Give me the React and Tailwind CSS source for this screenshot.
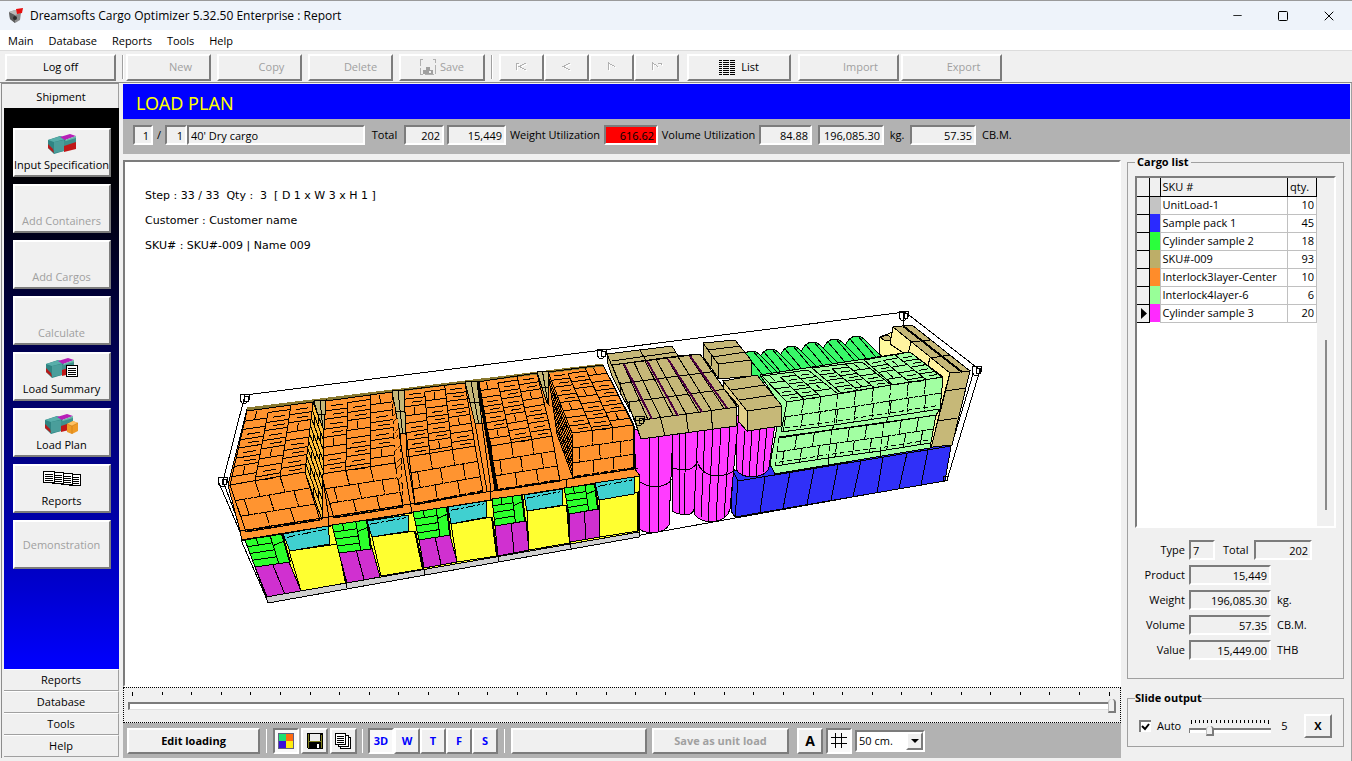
import React from 'react';
import clsx from 'clsx';
import { Minus, Square, X } from 'lucide-react';

const BEVEL = 'border-2 border-t-white border-l-white border-b-[#7c7c7c] border-r-[#7c7c7c] bg-[#f0f0f0]';
const SUNKEN = 'border-2 border-t-[#7c7c7c] border-l-[#7c7c7c] border-b-white border-r-white';

const MENU = ['Main', 'Database', 'Reports', 'Tools', 'Help'];

const CARGO = [
  { sku: 'UnitLoad-1', qty: 10, color: 'bg-[#c4c4c4]' },
  { sku: 'Sample pack 1', qty: 45, color: 'bg-[#2a2aff]' },
  { sku: 'Cylinder sample 2', qty: 18, color: 'bg-[#2aff3c]' },
  { sku: 'SKU#-009', qty: 93, color: 'bg-[#bdae68]' },
  { sku: 'Interlock3layer-Center', qty: 10, color: 'bg-[#ff8c2a]' },
  { sku: 'Interlock4layer-6', qty: 6, color: 'bg-[#98ff98]' },
  { sku: 'Cylinder sample 3', qty: 20, color: 'bg-[#ff2aff]' },
];

/* ---------- small building blocks ---------- */

const Button = ({ className, disabled, children, ...rest }) => (
  <button
    disabled={disabled}
    className={clsx('flex items-center justify-center whitespace-nowrap', BEVEL, disabled && 'text-[#a0a0a0]', className)}
    {...rest}
  >
    {children}
  </button>
);

const Field = ({ className, ...rest }) => (
  <input readOnly className={clsx('h-5 min-w-0 px-0.5 outline-none', SUNKEN, className)} {...rest} />
);

const Separator = () => <span className="w-0.5 h-6 border-l border-[#a0a0a0] border-r border-r-white shrink-0" />;

/* ---------- icons ---------- */

const AppIcon = () => (
  <svg width="16" height="16" viewBox="0 0 16 16">
    <path d="M1 4l6-2 6 3-1 7-5 3-5-4z" fill="#8a8a8a" />
    <path d="M1 4l6 3v8l-5-4z" fill="#5c5c5c" />
    <path d="M1 4l6-2 6 3-6 2z" fill="#b9b9b9" />
    <circle cx="7" cy="10" r="2" fill="#2b2b2b" />
    <path d="M8 1l7-1-1 5-5 1z" fill="#e80f0f" />
  </svg>
);

const CargoIcon = ({ children, shift = 0 }) => (
  <svg width="36" height="22" viewBox="0 0 36 22">
    <g transform={`translate(${4 + shift} 1)`}>
      <path d="M0 6l12-4 6 3-2 12-10 3-6-6z" fill="#2f8583" />
      <path d="M0 6l13-4 5 3-12 3z" fill="#58aeaa" />
      <path d="M6 8l10-2v11L6 19z" fill="#4a9e9b" />
      <path d="M0 10l5 5 1 4-6-5z" fill="#b81c1c" />
      <path d="M16 7l12-4v6l-12 4z" fill="#3e918c" />
      <path d="M16 12l12-4v7l-12 3z" fill="#c01818" />
      <path d="M12 3l10-3 6 2-11 4z" fill="#b81fb8" />
      <path d="M17 6l11-4v2l-10 3z" fill="#6ab8a8" />
    </g>
    {children}
  </svg>
);

const SummaryIcon = () => (
  <CargoIcon shift={-2}>
    <rect x="22.500" y="8.500" width="11" height="11" fill="#fff" stroke="#000" />
    <path d="M24 11.500h8M24 13.500h8M24 15.500h8M24 17.500h8" stroke="#000" />
  </CargoIcon>
);

const PlanIcon = () => (
  <CargoIcon shift={-3}>
    <path d="M23 11l6-3 5 2v8l-6 3-5-2z" fill="#ef9a26" />
    <path d="M23 11l6-3 5 2-6 3z" fill="#ffc164" />
    <path d="M28 13v8M23 11l5 2 6-3" fill="none" stroke="#c77a12" strokeWidth="0.6" />
  </CargoIcon>
);

const PagesIcon = () => (
  <svg width="38" height="20" viewBox="0 0 38 20" shapeRendering="crispEdges">
    {[26, 18, 9, 0].map((x, i) => (
      <g key={x}>
        <rect x={x + 0.5} y={3.5 - i} width="11" height="11" fill="#fff" stroke="#000" />
        <path d={`M${x + 2} ${6.5 - i}h8M${x + 2} ${8.5 - i}h8M${x + 2} ${10.5 - i}h8M${x + 2} ${12.5 - i}h8`} stroke="#000" />
      </g>
    ))}
  </svg>
);

const FloppyIcon = ({ disabled }) =>
  disabled ? (
    <svg width="16" height="16" viewBox="0 0 16 16" shapeRendering="crispEdges">
      <path d="M3 0.500H0.500v15h15v-15H13" fill="none" stroke="#b0b0b0" strokeDasharray="9 2" />
      <path d="M3 11h3V8h4v3h3v4H3z" fill="#a0a0a0" />
      <path d="M9 12h2v2H9z" fill="#f0f0f0" />
    </svg>
  ) : (
    <svg width="16" height="16" viewBox="0 0 16 16" shapeRendering="crispEdges">
      <path d="M0 0h16v16H1L0 15z" fill="#000" />
      <path d="M1 1h1v14H1zM14 2h1v13h-1zM2 8h12v1H2z" fill="#80801c" />
      <path d="M3 1h10v7H3z" fill="#ececec" />
      <path d="M10 11h2v4h-2z" fill="#fff" />
    </svg>
  );

const PaletteIcon = () => (
  <svg width="16" height="16" viewBox="0 0 16 16" shapeRendering="crispEdges">
    <rect width="16" height="16" fill="#606080" />
    <path d="M1 1h7v7H1z" fill="#1fe070" />
    <path d="M8 1h7v7H8z" fill="#ff6a10" />
    <path d="M1 8h7v7H1z" fill="#3a10d8" />
    <path d="M8 8h7v7H8z" fill="#ffee10" />
  </svg>
);

const CopiesIcon = () => (
  <svg width="17" height="16" viewBox="0 0 17 16" shapeRendering="crispEdges" fill="#fff" stroke="#000">
    <path d="M5.500 4.500h10v11h-10z" />
    <path d="M3.500 2.500h10v11h-10z" />
    <path d="M0.500 0.500h10v11h-10z" />
    <path d="M2 3.500h7M2 5.500h7M2 7.500h7M2 9.500h7" />
  </svg>
);

const ListIcon = () => (
  <svg width="16" height="15" viewBox="0 0 16 15" shapeRendering="crispEdges">
    <path d="M0 0.500h16M0 2.500h16M0 4.500h16M0 6.500h16M0 8.500h16M0 10.500h16M0 12.500h16M0 14.500h16" stroke="#000" strokeDasharray="3 1 6 1 5 0" />
  </svg>
);

const NavIcon = ({ d }) => (
  <svg width="14" height="10" viewBox="0 0 14 10" fill="none" shapeRendering="crispEdges">
    <path d={d} stroke="#fff" transform="translate(1 1)" />
    <path d={d} stroke="#b0b0b0" />
  </svg>
);

const GridIcon = () => (
  <svg width="18" height="18" viewBox="0 0 18 18" shapeRendering="crispEdges">
    <path d="M5.500 1v15M11.500 1v15M1 5.500h16M1 11.500h16" stroke="#000" />
  </svg>
);

/* ---------- 3D load drawing ---------- */

// point inside a four sided face, u runs left to right, v top to bottom
const at = ([a, b, c, d], u, v) => [
  (a[0] * (1 - u) + b[0] * u) * (1 - v) + (d[0] * (1 - u) + c[0] * u) * v,
  (a[1] * (1 - u) + b[1] * u) * (1 - v) + (d[1] * (1 - u) + c[1] * u) * v,
];
const pt = (p) => `${p[0].toFixed(1)} ${p[1].toFixed(1)}`;
const seg = (f, u1, v1, u2, v2) => `M${pt(at(f, u1, v1))}L${pt(at(f, u2, v2))}`;
const poly = (f) => `M${f.map(pt).join('L')}Z`;

// running bond
const bricks = (f, cols, rows, stagger = 0) => {
  let d = '';
  for (let r = 0; r < rows; r++) {
    if (r) d += seg(f, 0, r / rows, 1, r / rows);
    for (let c = 0; c <= cols; c++) {
      const u = (c + (r % 2 ? stagger : 0)) / cols;
      if (u > 0 && u < 1) d += seg(f, u, r / rows, u, (r + 1) / rows);
    }
  }
  return d;
};

// interlocked layer seen from above: slats with a turned box now and then
const slats = (f, cols, rows, seed = 0) => {
  let d = '';
  for (let r = 0; r < rows; r++) {
    for (let c = 0; c < cols; c++) {
      const u = c / cols;
      const w = 1 / cols;
      const h = 1 / rows;
      const v = r * h + (c % 2) * 0.25 * h;
      d += seg(f, u, v, u + w, v);
      if (c) d += seg(f, u, v, u, Math.min(1, v + h));
      if ((r + c + seed) % 3 === 0) {
        d += seg(f, u + w * 0.45, v + h * 0.1, u + w * 0.45, v + h * 0.5);
        d += seg(f, u, v + h * 0.55, u + w, v + h * 0.55);
      } else {
        d += seg(f, u + w * 0.25, v + h * 0.3, u + w * 0.8, v + h * 0.3);
        d += seg(f, u, v + h * 0.55, u + w, v + h * 0.55);
        d += seg(f, u + w * 0.35, v + h * 0.78, u + w * 0.85, v + h * 0.78);
      }
    }
  }
  return d;
};

const ORANGE_TOPS = [
  [[247, 412], [313, 403], [305, 473], [230, 486]],
  [[326, 402], [392, 393], [395, 464], [321, 475]],
  [[404, 391], [465, 384], [475, 447], [407, 458]],
  [[477, 383], [537, 374], [552, 437], [491, 447]],
  [[548, 373], [603, 366], [633, 426], [572, 434]],
];
const ORANGE_FRONTS = [
  [[230, 486], [305, 473], [320, 521], [246, 533]],
  [[321, 475], [395, 464], [403, 508], [334, 519]],
  [[407, 458], [475, 447], [483, 493], [415, 506]],
  [[491, 447], [552, 437], [560, 482], [496, 492]],
  [[572, 434], [633, 426], [634, 470], [573, 479]],
];
const TAN_GAPS = [
  [[314, 402], [326, 401], [324, 430], [322, 430]],
  [[392, 392], [404, 391], [406, 434], [399, 434]],
  [[465, 383], [477, 382], [482, 424], [475, 424]],
  [[537, 373], [548, 372], [549, 406], [547, 404]],
];
const SIDES = [
  { face: [[313, 403], [324, 432], [322, 521], [305, 473]], fill: '#ffbe3c' },
  { face: [[392, 393], [400, 434], [403, 508], [395, 464]], fill: '#3a2000' },
  { face: [[477, 383], [479, 383], [498, 491], [495, 491]], fill: '#000' },
  { face: [[548, 373], [572, 434], [573, 479], [557, 435]], fill: '#ff9430' },
];

const UNIT_LOADS = [
  {
    green: [[245, 541], [282, 535], [290, 563], [255, 568]],
    purple: [[255, 568], [289, 563], [301, 592], [267, 598]],
    cyan: [[283, 535], [328, 527], [330, 545], [290, 552]],
    yellow: [[289, 552], [338, 545], [346, 584], [301, 592]],
  },
  {
    green: [[332, 526], [367, 521], [371, 550], [339, 554]],
    purple: [[339, 554], [372, 549], [380, 578], [347, 584]],
    cyan: [[367, 522], [408, 516], [409, 532], [372, 538]],
    yellow: [[372, 538], [415, 532], [423, 570], [381, 577]],
  },
  {
    green: [[413, 513], [447, 508], [450, 536], [419, 541]],
    purple: [[419, 541], [450, 536], [457, 563], [424, 569]],
    cyan: [[448, 508], [486, 502], [487, 518], [451, 525]],
    yellow: [[451, 525], [492, 518], [497, 557], [457, 563]],
  },
  {
    green: [[492, 500], [522, 496], [525, 522], [495, 527]],
    purple: [[495, 527], [526, 522], [529, 551], [498, 557]],
    cyan: [[524, 496], [562, 490], [563, 506], [527, 512]],
    yellow: [[527, 512], [567, 506], [570, 544], [529, 551]],
  },
  {
    green: [[564, 489], [595, 485], [598, 510], [569, 515]],
    purple: [[569, 515], [599, 510], [600, 538], [570, 543]],
    cyan: [[595, 484], [634, 478], [634, 495], [599, 501]],
    yellow: [[599, 500], [638, 493], [638, 532], [600, 538]],
  },
];

const GREEN_TUBES = [[855, 337], [833, 340], [811, 343], [790, 347], [769, 350], [750, 352]];

const MINT_TOPS = [
  [[762, 377], [808, 371], [838, 395], [787, 403]],
  [[812, 369], [862, 363], [891, 386], [841, 394]],
  [[864, 361], [910, 353], [943, 378], [893, 386]],
];
const MINT_FRONTS = [
  [[787, 403], [838, 395], [834, 426], [781, 433]],
  [[838, 395], [891, 386], [888, 418], [834, 426]],
  [[891, 386], [943, 378], [940, 410], [888, 418]],
  [[779, 439], [832, 431], [828, 459], [775, 467]],
  [[832, 431], [884, 424], [880, 452], [828, 459]],
  [[884, 424], [936, 416], [930, 444], [880, 452]],
];

const TAN_TOP = [[612, 366], [700, 355], [737, 408], [635, 422]];
const TAN_FRONT = [[635, 422], [737, 408], [736, 427], [641, 440]];
const BLUE_SEAMS = [[765, 760], [790, 783], [814, 807], [838, 831], [861, 853], [883, 877], [907, 899], [928, 921]];

const CORNERS = [[223, 482], [245, 399], [602, 354], [640, 421], [904, 316], [977, 371]];

const LoadDrawing = () => (
  <svg width="775" height="305" viewBox="215 305 775 305" fill="none" stroke="#000" strokeWidth="1" shapeRendering="crispEdges" role="img" aria-label="Container load">
    {/* container wireframe */}
    <path d="M223 482L245 396L905 313L980 371L947 481M905 313L902 332M973 375L952 445M223 482L268 603L947 481M219 484L241 535" />

    {/* green tubes lying at the back */}
    {GREEN_TUBES.map(([x, y]) => (
      <g key={x}>
        <path fill="#38f868" d={`M${x - 10} ${y + 10}Q${x - 6} ${y} ${x + 2} ${y}Q${x + 6} ${y} ${x + 10} ${y + 4}L${x + 30} ${y + 24}L${x + 8} ${y + 34}Z`} />
        <path d={`M${x - 5} ${y + 3}l22 26M${x + 3} ${y}l22 26`} />
      </g>
    ))}

    {/* boxes by the door */}
    <path fill="#fffa9e" d="M880 338L893 333L930 360L943 390L900 375L879 354Z" />
    <path fill="#c6b878" d="M880 338L888 336L894 342L884 341Z" />
    <path fill="#fff3a0" d="M893 328L950 374L945 392L931 449L926 449L938 398L937 376L890 345Z" />
    <path fill="#c6b878" d="M893 328L912 326L970 372L950 374Z" />
    <path fill="#c6b878" d="M950 374L970 372L952 446L931 449Z" />
    <path d="M945 392L966 389M938 422L957 419M911 343L930 341M930 359L950 356M911 343L908 355M930 359L926 373" />
    <path d="M903 327L962 373" strokeWidth="2" />

    {/* sample packs */}
    <path fill="#3030f8" d="M733 472L950 446L951 447L945 482L735 518L731 512Z" />
    <path d={`M733 472L738 482L735 518M738 482L951 447${BLUE_SEAMS.map(([a, b]) => `M${a} ${482 - (a - 738) * 0.165}L${b} ${518 - (b - 735) * 0.172}`).join('')}`} />

    {/* interlocked 4 layer pallets */}
    <path fill="#a2ffa2" d="M760 376L910 353L943 379L940 410L936 416L930 449L775 475L770 465L781 407Z" />
    {MINT_TOPS.map((f, i) => (
      <path key={i} d={poly(f) + slats(f, 3, 2, i)} />
    ))}
    {MINT_FRONTS.map((f, i) => (
      <g key={i}>
        <path d={bricks(f, 3, 2, i > 2 ? 0.4 : 0.1)} strokeDasharray="9 1 4 1" />
        <path d={seg(f, 0, 0, 1, 0) + seg(f, 0, 1, 1, 1)} />
        <path d={seg(f, 0, 0, 0, 0.95) + seg(f, 0.06, 0.88, 0.98, 0.88)} strokeDasharray="5 3" />
      </g>
    ))}
    <path d="M779 438L937 416M774 475L930 449M828 459V466M880 452V458M834 426L832 431M888 418L886 424M787 403L781 433M943 378L940 410L936 416L930 449" />

    {/* magenta cylinders */}
    <g fill="#ff3cff">
      <path d="M672 430L672 512Q680 517 690 515Q696 512 696 500L698 430Z" />
      <path d="M736 416L736 470Q740 478 753 478Q768 476 769 468L775 425Z" />
      <path d="M698 428L694 514Q698 523 714 523Q728 520 730 510L738 424Z" />
      <path d="M634 430L638 528Q641 534 654 534Q666 532 669 526L673 430Z" />
    </g>
    <path d="M635 479Q645 488 655 488Q668 487 672 480M673 469Q682 472 690 470Q696 467 698 462M698 465Q704 477 717 477Q731 476 735 470" />
    <path d="M649 436L650 533M658 436L658 533M679 434V515M686 432L684 516M705 430L701 519M713 430L708 522M721 428L716 522M730 428L724 519M745 432L742 476M752 432L749 478M760 430L756 477M767 428L763 473" />

    {/* SKU#-009 boxes on top of the cylinders */}
    <path fill="#c6b878" d="M607 355L672 347L678 357L700 355L737 408L736 427L641 440L632 415L622 397L612 377L607 362Z" />
    <path d={`M607 355L635 422M612 366L678 357M640 351L646 362${bricks(TAN_TOP, 8, 3)}${poly(TAN_TOP)}${poly(TAN_FRONT)}${bricks(TAN_FRONT, 4, 1)}`} />
    <path d="M612 362L676 353M620 383L620 396M629 402L630 413" />
    <path d="M624 365L652 420M647 362L678 417M668 360L702 413M690 357L727 409" stroke="#4a0040" strokeWidth="2" />
    <g fill="#c6b878">
      <path d="M703 344L735 341L751 361L751 377L719 380L704 359Z" />
      <path d="M703 344L718 365L751 361M718 365L719 380M708 351L741 347M713 358L745 353M711 355L711 367" />
      <path d="M723 382L757 376L782 407L781 427L747 432L739 423L738 408L724 390Z" />
      <path d="M747 412L782 407M731 391L765 386M739 401L773 396" />
      <path fill="#e2cf8a" d="M723 382L747 412L747 432L739 423L738 406L724 390Z" />
    </g>

    {/* interlocked 3 layer pallets */}
    <path fill="#ff9430" d="M247 410L603 366L634 426L635 470L640 477L242 542L240 532L228 486Z" />
    <path d="M247 410L603 366" stroke="#8a7a30" strokeWidth="3" />
    {TAN_GAPS.map((f, i) => (
      <path key={i} fill="#c6b878" d={poly(f) + seg(f, 0.5, 0, 0.5, 1) + seg(f, 0, 0.5, 1, 0.5)} />
    ))}
    {ORANGE_TOPS.map((f, i) => (
      <path key={i} d={poly(f) + slats(f, 3, 4, i)} />
    ))}
    {ORANGE_FRONTS.map((f, i) => (
      <g key={i}>
        <path d={poly(f) + seg(f, 0, 1, 1, 1)} />
        <path d={bricks(f, 3, 3, 0.35)} strokeDasharray="12 1 5 1" />
      </g>
    ))}
    {SIDES.map(({ face, fill }, i) => (
      <g key={i}>
        <path d={poly(face)} fill={fill} />
        {i !== 2 && <path d={bricks(face, i === 1 ? 3 : 2, 9, 0.5)} stroke={i === 1 ? '#ff9430' : '#000'} />}
      </g>
    ))}
    <path d="M322 475L329 519M399 434L411 508M406 434L415 505M475 424L487 492M482 424L491 491M240 532L638 469M241 541L640 477M328 519V527M411 508L412 514M490 491V500M566 480V488" />
    <path d="M247 532L320 520M334 518L403 507M415 505L483 492M497 491L560 481M574 478L634 469" strokeWidth="2" strokeDasharray="7 2" />

    {/* unit loads on the floor */}
    <path fill="#ffff30" d="M245 541L640 477L639 533L267 598Z" />
    {UNIT_LOADS.map(({ green, purple, cyan, yellow }, i) => (
      <g key={i}>
        <path fill="#ffff30" d={poly(yellow)} />
        <path fill="#40d0d0" d={poly(cyan)} />
        <path d={seg(cyan, 0.05, 0.22, 0.95, 0.15)} strokeDasharray="9 2 3 2" />
        <path fill="#d030d0" d={poly(purple) + seg(purple, 0.52, 0, 0.52, 1)} />
        <path
          fill="#2cff2c"
          d={poly(green) + seg(green, 0.68, 0, 0.68, 1) + seg(green, 0, 0.25, 0.68, 0.25) + seg(green, 0, 0.5, 0.68, 0.5) + seg(green, 0, 0.75, 0.68, 0.75) + seg(green, 0.3, 0, 0.3, 0.25) + seg(green, 0.68, 0.35, 1, 0.25)}
        />
        <path d={seg(green, 1, 0, 1, 1) + seg(yellow, 1, 0, 1, 1)} strokeWidth="2" />
      </g>
    ))}
    <path fill="#cfcfcf" d="M266 598L639 533L639 538L268 604Z" />
    <path d="M346 584V589M424 570V576M498 557V563M570 544V549M241 541L268 603" />

    {/* corner castings */}
    {CORNERS.map(([x, y]) => (
      <path key={x} d={`M${x - 4} ${y - 4}h8v6l-3 3h-4l-2 -3zM${x - 1} ${y - 2}h4v5h-4z`} />
    ))}
    <path d="M943 477h4v4h-4z" />
  </svg>
);

/* ---------- window parts ---------- */

const TitleBar = () => (
  <header className="flex items-center h-[30px] bg-[#eef3fa] pl-2 text-xs border-t border-[#9a9a9a]">
    <AppIcon />
    <h1 className="ml-1.5 grow font-['Open_Sans','Noto_Sans',sans-serif]">Dreamsofts Cargo Optimizer 5.32.50 Enterprise : Report</h1>
    <button aria-label="Minimize" className="w-[46px] flex justify-center"><Minus size={13} strokeWidth={1.5} /></button>
    <button aria-label="Maximize" className="w-[46px] flex justify-center"><Square size={12} strokeWidth={2} /></button>
    <button aria-label="Close" className="w-[46px] flex justify-center"><X size={16} strokeWidth={1.5} /></button>
  </header>
);

const Toolbar = () => (
  <div className="flex items-center h-[33px] pl-[5px] pt-px border-t border-[#dcdcdc] border-b border-b-[#8c8c8c] whitespace-nowrap">
    <Button className="w-[111px] h-[27px]">Log off</Button>
    <span className="ml-1.5 flex"><Separator /></span>
    <div className="flex gap-1.5 ml-0.5">
      <Button disabled className="w-[85px] h-[27px] pl-6">New</Button>
      <Button disabled className="w-[85px] h-[27px] pl-6">Copy</Button>
      <Button disabled className="w-[85px] h-[27px] pl-5">Delete</Button>
      <Button disabled className="w-[86px] h-[27px] gap-1"><FloppyIcon disabled />Save</Button>
    </div>
    <span className="ml-1.5 mr-1.5 flex"><Separator /></span>
    <div className="flex">
      <Button disabled aria-label="First" className="w-[45px] h-[27px]"><NavIcon d="M1.500 8V1.500H4M11 1L4.500 4.500L11 8" /></Button>
      <Button disabled aria-label="Previous" className="w-[45px] h-[27px]"><NavIcon d="M10 1L3.500 4.500L10 8" /></Button>
      <Button disabled aria-label="Next" className="w-[45px] h-[27px]"><NavIcon d="M3.500 8V1L10 4.500" /></Button>
      <Button disabled aria-label="Last" className="w-[45px] h-[27px]"><NavIcon d="M2.500 8V1L8 4.500M8 1H11.500V3" /></Button>
    </div>
    <Button className="ml-2 w-[104px] h-[27px] gap-1.5"><ListIcon />List</Button>
    <Button disabled className="ml-[7px] w-[101px] h-[27px] pl-6">Import</Button>
    <Button disabled className="ml-0.5 w-[101px] h-[27px] pl-6">Export</Button>
  </div>
);

const SideButton = ({ icon, label, disabled }) => (
  <Button disabled={disabled} className={clsx('w-[98px] h-[49px] flex-col', icon || label !== 'Demonstration' ? 'justify-end' : '')}>
    {icon}
    <span className="leading-5">{label}</span>
  </Button>
);

const Sidebar = () => (
  <nav className="w-[118px] shrink-0 flex flex-col border-l border-t border-[#8c8c8c] pl-0.5 pb-px">
    <button className="h-6 bg-[#f0f0f0] border-r border-[#a0a0a0] pt-px">Shipment</button>
    <div className="grow flex flex-col items-center gap-[7px] pt-5 bg-linear-to-b from-black to-[#0000ff]">
      <SideButton icon={<CargoIcon />} label="Input Specification" />
      <SideButton disabled label="Add Containers" />
      <SideButton disabled label="Add Cargos" />
      <SideButton disabled label="Calculate" />
      <SideButton icon={<SummaryIcon />} label="Load Summary" />
      <SideButton icon={<PlanIcon />} label="Load Plan" />
      <SideButton icon={<PagesIcon />} label="Reports" />
      <SideButton disabled label="Demonstration" />
    </div>
    {['Reports', 'Database', 'Tools', 'Help'].map((label) => (
      <button key={label} className="h-[22px] bg-[#f0f0f0] border-b border-r border-[#a0a0a0] border-t border-t-white">{label}</button>
    ))}
  </nav>
);

const InfoBar = () => (
  <div className="flex items-center h-[35px] bg-[#b2b2b2] pl-2.5 pb-[3px] whitespace-nowrap">
    <Field aria-label="Container" defaultValue="1" className="w-5 text-right bg-[#f0f0f0]" />
    <span className="w-3 text-center">/</span>
    <Field aria-label="Container count" defaultValue="1" className="w-[22px] text-right bg-[#f0f0f0]" />
    <Field aria-label="Container type" defaultValue="40' Dry cargo" className="w-[178px] bg-[#f0f0f0]" />
    <label htmlFor="total" className="w-[39px] text-center">Total</label>
    <Field id="total" defaultValue="202" className="w-10 text-right bg-[#f0f0f0]" />
    <Field aria-label="Total products" defaultValue="15,449" className="w-[59px] ml-[3px] text-right bg-[#f0f0f0]" />
    <label htmlFor="wu" className="w-[98px] text-center">Weight Utilization</label>
    <Field id="wu" defaultValue="616.62" className="w-[54px] text-right bg-[#ff0000]" />
    <label htmlFor="vu" className="w-[101px] text-center">Volume Utilization</label>
    <Field id="vu" defaultValue="84.88" className="w-[53px] text-right bg-[#f0f0f0]" />
    <Field id="weight-total" defaultValue="196,085.30" className="w-[66px] ml-1.5 text-right bg-[#f0f0f0]" />
    <label htmlFor="weight-total" className="w-[26px] text-center">kg.</label>
    <Field id="volume-total" defaultValue="57.35" className="w-[66px] text-right bg-[#f0f0f0]" />
    <label htmlFor="volume-total" className="ml-1.5">CB.M.</label>
  </div>
);

const THUMB =
  '[&::-webkit-slider-thumb]:appearance-none [&::-webkit-slider-thumb]:w-2 [&::-webkit-slider-thumb]:border-r-2 [&::-webkit-slider-thumb]:border-b-2 [&::-webkit-slider-thumb]:border-l [&::-webkit-slider-thumb]:border-[#7c7c7c] [&::-webkit-slider-thumb]:border-l-[#c0c0c0] [&::-webkit-slider-thumb]:bg-[#f0f0f0] [&::-webkit-slider-thumb]:rounded-t-sm';

const StepSlider = () => (
  <div className="h-9 border border-dotted border-black bg-[#f0f0f0] px-1 pt-1">
    <div className="flex justify-between pl-1 pr-1.5">
      {Array.from({ length: 34 }, (_, i) => (
        <span key={i} className={clsx('w-px bg-black', i === 0 || i === 33 ? 'h-1' : 'h-[3px]')} />
      ))}
    </div>
    <input
      type="range"
      aria-label="Step"
      min="0"
      max="33"
      defaultValue="33"
      className={clsx(
        'block mt-1.5 w-full h-2 appearance-none bg-white border-t-2 border-l-2 border-[#7c7c7c] border-b border-b-[#e0e0e0]',
        '[&::-webkit-slider-thumb]:h-[14px] [&::-webkit-slider-thumb]:-mt-0.5',
        THUMB,
      )}
    />
  </div>
);

const VIEWS = ['3D', 'W', 'T', 'F', 'S'];

const BottomBar = () => (
  <div className="flex items-center h-[35px] bg-[#b2b2b2] pl-1 pt-px whitespace-nowrap font-bold">
    <Button className="w-[133px] h-[26px]">Edit loading</Button>
    <span className="w-px h-6 bg-white mx-1.5" />
    <div className="flex gap-0.5">
      <button aria-label="Colors" className={clsx('w-[26px] h-[26px] flex items-center justify-center bg-[#f8f8f8]', SUNKEN)}><PaletteIcon /></button>
      <Button aria-label="Save picture" className="w-[27px] h-[26px]"><FloppyIcon /></Button>
      <Button aria-label="Copy pages" className="w-[27px] h-[26px]"><CopiesIcon /></Button>
    </div>
    <span className="w-px h-6 bg-white mx-[5px]" />
    <div className="flex">
      {VIEWS.map((v, i) => (
        <button
          key={v}
          className={clsx('w-[26px] h-[26px] text-[#0000ff]', i === 0 ? `${SUNKEN} bg-[#f8f8f8]` : BEVEL)}
        >
          {v}
        </button>
      ))}
    </div>
    <span className="w-px h-6 bg-white mx-1.5" />
    <Button aria-label="Selected cargo" className="w-[136px] h-[26px]" />
    <Button disabled className="ml-[5px] w-[137px] h-[26px]">Save as unit load</Button>
    <Button className="ml-2 w-[26px] h-[26px] text-sm">A</Button>
    <button aria-label="Grid" className={clsx('ml-[3px] w-[26px] h-[26px] flex items-center justify-center bg-[#f8f8f8]', SUNKEN)}><GridIcon /></button>
    <div className="relative ml-[3px] font-normal">
      <select aria-label="Grid size" className={clsx('block w-[70px] h-[22px] pl-0.5 appearance-none bg-white outline-none', SUNKEN)}>
        <option>50 cm.</option>
      </select>
      <span className={clsx('absolute right-0.5 top-0.5 w-[17px] h-[18px] flex items-center justify-center pointer-events-none', BEVEL)}>
        <svg width="8" height="4" viewBox="0 0 8 4"><path d="M0 0h8L4 4z" /></svg>
      </span>
    </div>
  </div>
);

const CargoTable = () => (
  <div className={clsx('flex h-[352px] bg-white', SUNKEN)}>
    <div className="grow">
      <table className="w-full table-fixed border-collapse">
        <thead>
          <tr className="h-[18px] bg-[#f0f0f0] text-left">
            <th aria-label="Current row" className="w-3 border-r border-b border-black" />
            <th aria-label="Color" className="w-[11px] border-r border-b border-black" />
            <th className="font-normal border-r border-b border-black pl-0.5">SKU #</th>
            <th className="w-[29px] font-normal border-r border-b border-black pl-0.5">qty.</th>
          </tr>
        </thead>
        <tbody>
          {CARGO.map(({ sku, qty, color }, i) => (
            <tr key={sku} className="h-[18px] leading-4">
              <td className="bg-[#f0f0f0] border-r border-b border-black p-0">
                {i === CARGO.length - 1 && (
                  <svg className="ml-1" width="6" height="11" viewBox="0 0 6 11"><path d="M0 0l6 5.500L0 11z" /></svg>
                )}
              </td>
              <td className={clsx('p-0', color)} />
              <td className="border-l border-r border-b border-[#c0c0c0] py-0 pl-0.5 pr-0 whitespace-nowrap">{sku}</td>
              <td className="border-r border-b border-[#c0c0c0] py-0 pl-0 pr-0.5 text-right">{qty}</td>
            </tr>
          ))}
        </tbody>
      </table>
    </div>
    <div className="w-[17px] shrink-0 bg-[#f0f0f0] flex justify-center pt-[162px]">
      <span className="w-0.5 h-[170px] bg-[#8a8a8a]" />
    </div>
  </div>
);

const TOTALS = [
  { label: 'Product', value: '15,449', unit: '' },
  { label: 'Weight', value: '196,085.30', unit: 'kg.' },
  { label: 'Volume', value: '57.35', unit: 'CB.M.' },
  { label: 'Value', value: '15,449.00', unit: 'THB' },
];

const RightPanel = () => (
  <aside className="w-[229px] shrink-0 bg-[#f0f0f0] pl-1.5 pr-1.5">
    <fieldset className="border border-[#a0a0a0] px-[7px] pb-4 h-[525px]">
      <legend className="font-bold px-0.5 leading-4">Cargo list</legend>
      <div className="mt-1.5"><CargoTable /></div>
      <div className="mt-3 flex flex-col gap-[5px]">
        <div className="flex items-center">
          <label htmlFor="type" className="w-[50px] text-right">Type</label>
          <Field id="type" defaultValue="7" className="ml-1 w-[26px]" />
          <label htmlFor="sum" className="ml-2 w-[27px]">Total</label>
          <Field id="sum" defaultValue="202" className="ml-1 w-[58px] text-right" />
        </div>
        {TOTALS.map(({ label, value, unit }) => (
          <div key={label} className="flex items-center">
            <label htmlFor={label} className="w-[50px] text-right">{label}</label>
            <Field id={label} defaultValue={value} className="ml-1 w-[82px] text-right" />
            <span className="ml-1.5">{unit}</span>
          </div>
        ))}
      </div>
    </fieldset>
    <fieldset className="mt-[11px] border border-[#a0a0a0] px-[11px] h-[57px]">
      <legend className="font-bold leading-4 -ml-1">Slide output</legend>
      <div className="flex items-center mt-2">
        <span className="relative flex">
          <input
            id="auto"
            type="checkbox"
            defaultChecked
            className="peer appearance-none w-3 h-3 bg-white border-t-2 border-l-2 border-[#7c7c7c]"
          />
          <svg className="absolute left-0.5 top-0.5 hidden peer-checked:block pointer-events-none" width="10" height="9" viewBox="0 0 10 9">
            <path d="M1 4l3 3 4-5" fill="none" stroke="#000" strokeWidth="2" />
          </svg>
        </span>
        <label htmlFor="auto" className="ml-1.5">Auto</label>
        <div className="ml-2 w-[82px]">
          <div className="flex justify-between px-0.5">
            {Array.from({ length: 20 }, (_, i) => (
              <span key={i} className={clsx('w-px bg-black', i === 0 || i === 19 ? 'h-1' : 'h-[3px]')} />
            ))}
          </div>
          <input
            type="range"
            aria-label="Slide delay"
            min="1"
            max="20"
            defaultValue="5"
            className={clsx(
              'block mt-1 w-full h-[5px] appearance-none bg-white border-t-2 border-l border-[#7c7c7c]',
              '[&::-webkit-slider-thumb]:h-[10px]',
              THUMB,
            )}
          />
        </div>
        <span className="ml-2.5 grow">5</span>
        <Button aria-label="Stop" className="w-7 h-6 font-bold">X</Button>
      </div>
    </fieldset>
  </aside>
);

const App = () => (
  <div className="flex flex-col min-h-screen bg-[#f0f0f0] text-black text-[11px] leading-4 font-['Open_Sans','Noto_Sans',sans-serif]">
    <TitleBar />
    <nav className="flex items-center gap-[15px] h-5 pt-0.5 bg-white pl-2">
      {MENU.map((item) => (
        <button key={item}>{item}</button>
      ))}
    </nav>
    <Toolbar />
    <div className="grow flex pl-px pb-[3px] border-r border-[#a0a0a0]">
      <Sidebar />
      <div className="grow ml-1 mr-px pt-px flex flex-col min-w-0">
        <h2 className="h-[35px] flex items-center pl-[13px] pt-0.5 bg-[#0000ff] text-[#ffff00] text-lg font-['Noto_Sans',sans-serif]">LOAD PLAN</h2>
        <InfoBar />
        <div className="grow flex">
          <main className="grow flex flex-col min-w-0 pt-1.5">
            <section className={clsx('grow bg-white pl-5 pt-6', SUNKEN)}>
              <div className="flex flex-col gap-[5px] leading-5 font-['DejaVu_Sans',sans-serif]">
                <p className="whitespace-pre">Step : 33 / 33  Qty :  3  [ D 1 x W 3 x H 1 ]</p>
                <p>Customer : Customer name</p>
                <p>SKU# : SKU#-009 | Name 009</p>
              </div>
              <div className="mt-12 ml-[70px]"><LoadDrawing /></div>
            </section>
            <StepSlider />
            <BottomBar />
          </main>
          <RightPanel />
        </div>
      </div>
    </div>
  </div>
);

export default App;
